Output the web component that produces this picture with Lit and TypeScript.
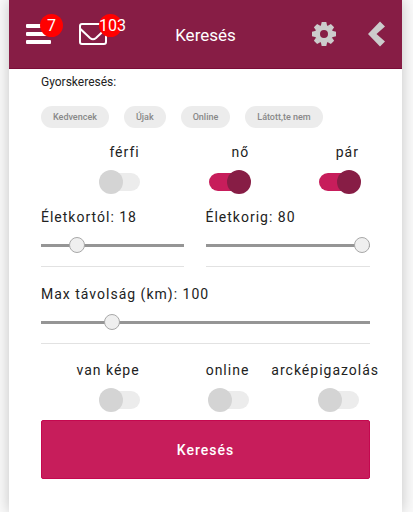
import { LitElement, html, svg, css } from "lit";
import { customElement, property } from "lit/decorators.js";

@customElement("toggle-switch")
class ToggleSwitch extends LitElement {
  @property() label = "";
  @property({ type: Boolean }) on = false;

  static styles = css`
    :host {
      display: block;
      min-width: 0;
      padding: 0 11px;
    }
    .field {
      display: block;
      text-align: right;
      white-space: nowrap;
      line-height: 20px;
    }
    .switch {
      appearance: none;
      display: block;
      box-sizing: border-box;
      position: relative;
      width: 40px;
      height: 18px;
      margin: 11px 0 4px auto;
      border-radius: 9px;
      background: #ececec;
      cursor: pointer;
    }
    .switch::before {
      content: "";
      position: absolute;
      top: -3px;
      left: -1px;
      width: 24px;
      height: 24px;
      border-radius: 50%;
      background: #d4d4d4;
    }
    .switch:checked {
      background: #c71d5b;
    }
    .switch:checked::before {
      left: auto;
      right: -2px;
      background: #871d45;
    }
  `;

  render() {
    return html`<label class="field">
      ${this.label}
      <input class="switch" type="checkbox" .checked=${this.on} />
    </label>`;
  }
}

@customElement("range-field")
class RangeField extends LitElement {
  @property() label = "";
  @property({ type: Number }) value = 0;
  @property({ type: Number }) max = 100;

  static styles = css`
    :host {
      display: block;
      border-bottom: 1px solid #e2e2e2;
    }
    .field {
      display: block;
      line-height: 20px;
      white-space: nowrap;
    }
    .range {
      appearance: none;
      display: block;
      width: 100%;
      height: 16px;
      margin: 10px 0 13px;
      background: transparent;
      cursor: pointer;
    }
    .range::-webkit-slider-runnable-track {
      height: 3px;
      background: #959595;
    }
    .range::-webkit-slider-thumb {
      appearance: none;
      box-sizing: border-box;
      width: 16px;
      height: 16px;
      margin-top: -7px;
      border: 1px solid #a8a8a8;
      border-radius: 50%;
      background: #efefef;
    }
  `;

  private slide(e: Event) {
    this.value = Number((e.target as HTMLInputElement).value);
  }

  render() {
    return html`<label class="field">
      ${this.label}: ${this.value}
      <input
        class="range"
        type="range"
        min="0"
        max=${this.max}
        .value=${String(this.value)}
        @input=${this.slide}
      />
    </label>`;
  }
}

@customElement("app-root")
class AppRoot extends LitElement {
  static styles = css`
    :host {
      display: block;
      min-height: 100vh;
      box-sizing: border-box;
      padding: 0 11px 0 9px;
      overflow: hidden;
      background: #fafafa;
      font-family: Roboto, "Liberation Sans", sans-serif;
      font-size: 14px;
      color: #222;
    }
    .panel {
      min-height: 100vh;
      background: #fff;
      box-shadow: 0 0 14px rgba(0, 0, 0, 0.22);
    }
    .bar {
      display: grid;
      grid-template-columns: 1fr auto 1fr;
      align-items: center;
      height: 69px;
      box-sizing: border-box;
      padding: 0 17px;
      background: #871d45;
      border-bottom: 1px solid #7a0c38;
      color: #fff;
    }
    .title {
      margin: 0;
      padding-top: 2px;
      font-size: 17px;
      font-weight: 400;
      line-height: 24px;
    }
    .group {
      display: flex;
      align-items: center;
      gap: 28px;
    }
    .end {
      justify-content: flex-end;
      gap: 32px;
    }
    .icon {
      position: relative;
      display: block;
      padding: 0;
      border: 0;
      background: none;
      color: inherit;
      font: inherit;
      cursor: pointer;
    }
    .icon svg {
      display: block;
    }
    .soft {
      color: #ccc;
    }
    .badge {
      position: absolute;
      top: -9px;
      right: -12px;
      display: flex;
      justify-content: center;
      align-items: center;
      width: 23px;
      height: 23px;
      border-radius: 50%;
      background: #f00;
      font-size: 16px;
      line-height: 23px;
    }
    .badge.wide {
      right: -15px;
      justify-content: flex-start;
    }
    .content {
      padding: 3px 32px 32px;
    }
    .caption {
      margin: 0;
      font-size: 12px;
      font-weight: 400;
      line-height: 20px;
    }
    .chips {
      display: flex;
      flex-wrap: wrap;
      gap: 15px;
      margin: 14px 0;
    }
    .chip {
      height: 22px;
      padding: 0 12px;
      border: 0;
      border-radius: 11px;
      background: #ececec;
      color: #888;
      font: 500 9px/22px Roboto, "Liberation Sans", sans-serif;
      cursor: pointer;
    }
    .form {
      letter-spacing: 1px;
    }
    .switches {
      display: grid;
      grid-template-columns: repeat(3, minmax(0, 1fr));
    }
    .ages {
      display: grid;
      grid-template-columns: 1fr 1fr;
      margin: 12px 0 17px;
    }
    .from {
      margin-right: 22px;
    }
    .distance {
      margin-bottom: 16px;
    }
    .submit {
      display: block;
      width: 100%;
      height: 59px;
      margin-top: 7px;
      border: 1px solid #c4084f;
      border-radius: 2px;
      background: #c71d5b;
      color: #fff;
      font: 500 14px/20px Roboto, "Liberation Sans", sans-serif;
      letter-spacing: inherit;
      cursor: pointer;
    }
  `;

  render() {
    return html`
      <main class="panel">
        <header class="bar">
          <div class="group">
            <button class="icon" aria-label="Menü">
              <svg width="25" height="22" viewBox="0 0 25 22" fill="currentColor">
                <rect y="1" width="25" height="4" rx="1" />
                <rect y="9" width="25" height="4" rx="1" />
                <rect y="17" width="25" height="4" rx="1" />
              </svg>
              <span class="badge">7</span>
            </button>
            <button class="icon" aria-label="Üzenetek">
              <svg width="28" height="22" viewBox="0 0 28 22" fill="none" stroke="currentColor" stroke-width="2" stroke-linejoin="round">
                <rect x="1" y="1" width="26" height="20" rx="2" />
                <path d="M1.500 6C5 9.500 8.500 12.500 11 15Q14 17.500 17 15C19.500 12.500 23 9.500 26.500 6" />
              </svg>
              <span class="badge wide">103</span>
            </button>
          </div>
          <h1 class="title">Keresés</h1>
          <div class="group end">
            <button class="icon soft" aria-label="Beállítások">
              <svg width="24" height="24" viewBox="-12 -12 24 24" fill="currentColor">
                <circle r="6.500" fill="none" stroke="currentColor" stroke-width="5" />
                ${[0, 45, 90, 135, 180, 225, 270, 315].map(
                  (angle) => svg`<path d="M-3.200 -8L-2.300 -12H2.300L3.200 -8Z" transform="rotate(${angle})" />`
                )}
              </svg>
            </button>
            <button class="icon soft" aria-label="Vissza">
              <svg width="17" height="26" viewBox="0 0 17 26" fill="currentColor">
                <path d="M0 13L12 0.500L17 5.500L8.500 13L17 20.500L12 25.500Z" />
              </svg>
            </button>
          </div>
        </header>
        <div class="content">
          <h2 class="caption">Gyorskeresés:</h2>
          <nav class="chips">
            ${["Kedvencek", "Újak", "Online", "Látott,te nem"].map(
              (name) => html`<button class="chip">${name}</button>`
            )}
          </nav>
          <div class="form">
            <div class="switches">
              <toggle-switch label="férfi"></toggle-switch>
              <toggle-switch label="nő" on></toggle-switch>
              <toggle-switch label="pár" on></toggle-switch>
            </div>
            <div class="ages">
              <range-field class="from" label="Életkortól" value="18" max="80"></range-field>
              <range-field label="Életkorig" value="80" max="80"></range-field>
            </div>
            <range-field class="distance" label="Max távolság (km)" value="100" max="500"></range-field>
            <div class="switches">
              <toggle-switch label="van képe"></toggle-switch>
              <toggle-switch label="online"></toggle-switch>
              <toggle-switch label="arcképigazolás"></toggle-switch>
            </div>
            <button class="submit">Keresés</button>
          </div>
        </div>
      </main>
    `;
  }
}
